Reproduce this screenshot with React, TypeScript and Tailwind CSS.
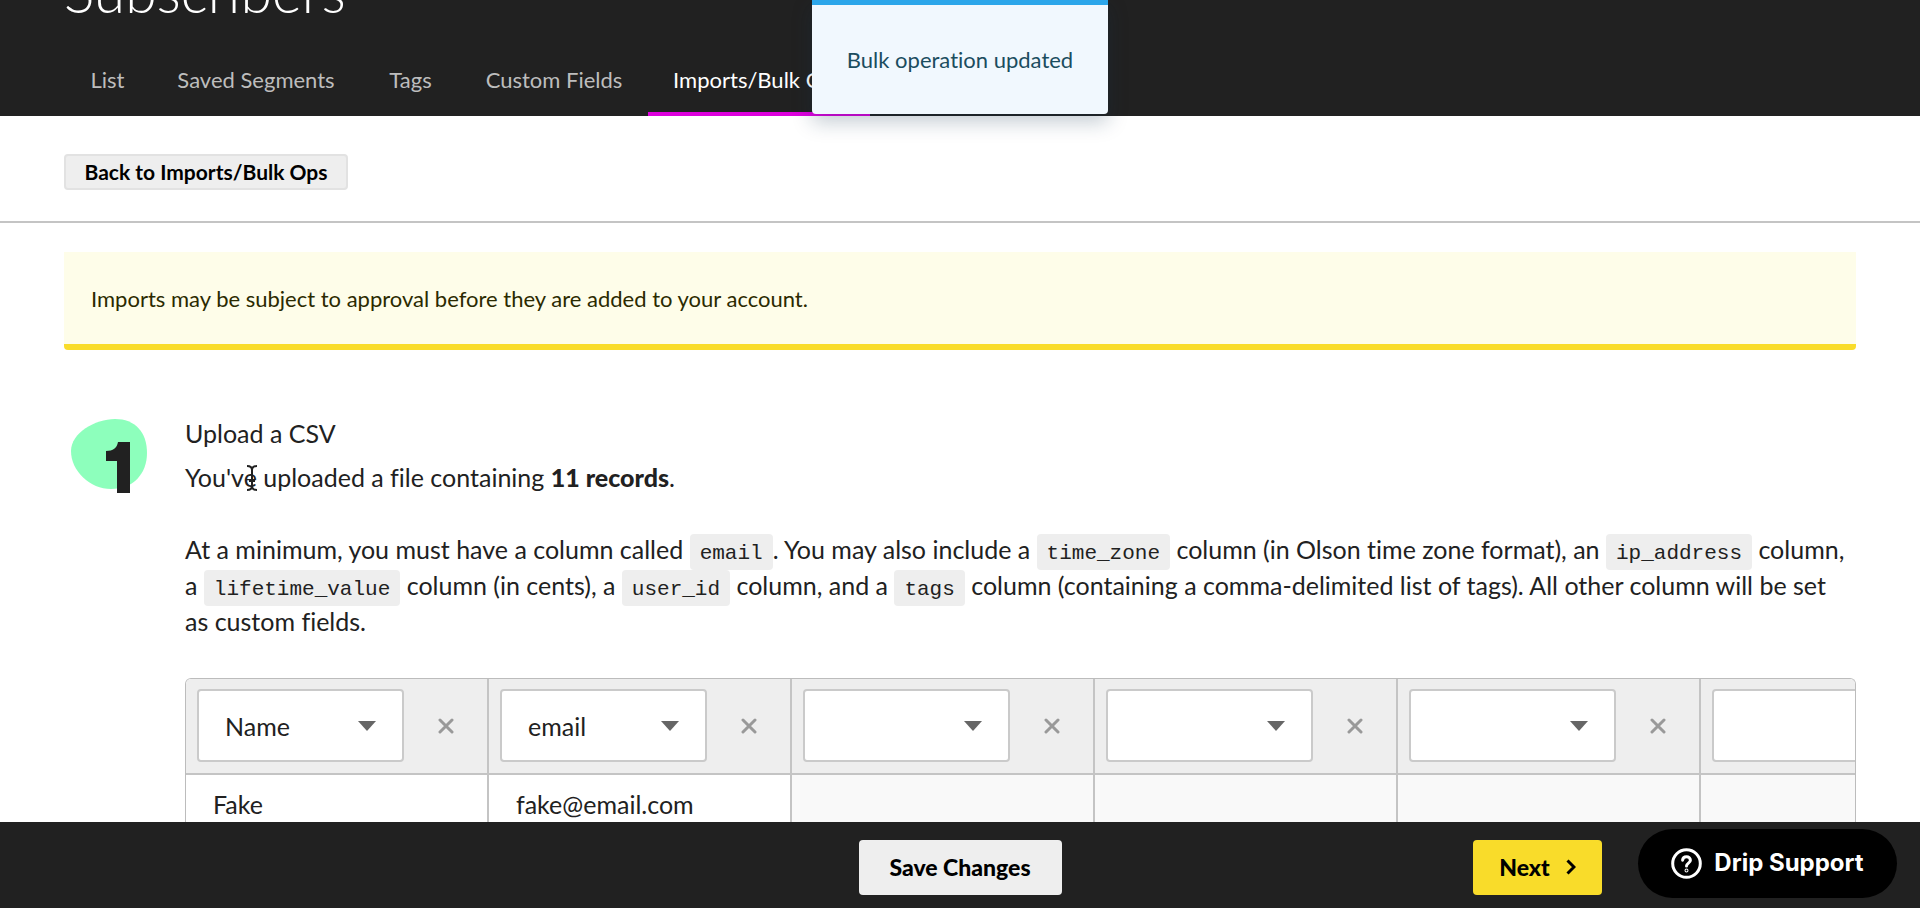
import type { ReactNode } from 'react'

const tabs = [
  { label: 'List', width: 'w-[87px]' },
  { label: 'Saved Segments', width: 'w-[210px]' },
  { label: 'Tags', width: 'w-[99px]' },
  { label: 'Custom Fields', width: 'w-[188px]' },
  { label: 'Imports/Bulk Ops', width: 'w-[222px]', active: true }
]

const columns = [
  { id: 'col-1', field: 'Name', value: 'Fake' },
  { id: 'col-2', field: 'email', value: 'fake@email.com' },
  { id: 'col-3', field: '', value: '' },
  { id: 'col-4', field: '', value: '' },
  { id: 'col-5', field: '', value: '' },
  { id: 'col-6', field: '', value: '' }
]

function Code({ children }: { children: ReactNode }) {
  return (
    <code className="rounded bg-[#eeeeee] px-[10px] pt-2 pb-[5px] font-['Liberation_Mono',monospace] text-[21px] leading-6">
      {children}
    </code>
  )
}

function Header() {
  return (
    <header className="flex h-[116px] shrink-0 flex-col overflow-hidden bg-[#212121] px-16">
      <div className="flex h-[19px] shrink-0 items-end">
        <h1 className="text-[57px] leading-[56px] font-light text-white">Subscribers</h1>
      </div>
      <nav className="flex flex-1">
        {tabs.map((tab) => (
          <a
            key={tab.label}
            href="#"
            className={`flex h-[97px] items-center justify-center border-b-4 pt-[27px] text-[22px] whitespace-nowrap ${tab.width} ${
              tab.active ? 'border-[#dd00dd] text-white' : 'border-transparent text-[#bdbdbd]'
            }`}
          >
            {tab.label}
          </a>
        ))}
      </nav>
    </header>
  )
}

function Toast() {
  return (
    <div
      role="status"
      className="absolute top-0 left-1/2 flex h-[114px] w-[296px] -translate-x-1/2 items-center justify-center rounded-b border-t-[5px] border-[#2ca6ea] bg-[#f1f8fe] text-[22px] whitespace-nowrap text-[#1b4d5f] shadow-[0_8px_20px_rgba(20,50,80,0.25)]"
    >
      Bulk operation updated
    </div>
  )
}

function StepBadge() {
  return (
    <svg className="ml-[7px] h-[78px] w-[78px] shrink-0" viewBox="0 0 78 78" aria-hidden="true">
      <path
        d="M44 0C64 0 76 13 76 34C76 55 62 70 40 70C19 70 0 52 0 32C0 14 24 0 44 0Z"
        fill="#8dffbc"
      />
      <path d="M47 23H59V74H46V42H35V32C42 32 46 29 47 23Z" fill="#212121" />
    </svg>
  )
}

function ColumnHeader({ id, field }: { id: string; field: string }) {
  return (
    <div className="flex items-center pt-[10px] pb-[11px] pl-[11px]">
      <div className="relative">
        <select
          id={id}
          aria-label="Column field"
          defaultValue={field}
          className="h-[73px] w-[207px] appearance-none rounded border-2 border-[#cacaca] bg-white pr-14 pl-[26px] text-[25px] font-normal text-[#212121]"
        >
          <option value={field}>{field}</option>
        </select>
        <svg className="pointer-events-none absolute top-8 right-7 h-[10px] w-[18px]" viewBox="0 0 18 10" aria-hidden="true">
          <path d="M0 0H18L9 10Z" fill="#666" />
        </svg>
      </div>
      <button type="button" aria-label="Remove column" className="flex flex-1 justify-center">
        <svg className="h-4 w-4" viewBox="0 0 16 16" fill="none" stroke="#999" strokeWidth="3" strokeLinecap="round" aria-hidden="true">
          <path d="M2 2L14 14M14 2L2 14" />
        </svg>
      </button>
    </div>
  )
}

function ImportTable() {
  return (
    <div className="mt-[39px] overflow-hidden rounded-t-md border border-b-0 border-[#bcbcbc]">
      <table className="w-[1818px] table-fixed border-separate border-spacing-0 text-left">
        <thead>
          <tr className="bg-[#eeeeee]">
            {columns.map((col) => (
              <th key={col.id} className="border-r-2 border-b-2 border-[#c4c4c4] p-0">
                <ColumnHeader id={col.id} field={col.field} />
              </th>
            ))}
          </tr>
        </thead>
        <tbody>
          <tr>
            {columns.map((col) => (
              <td key={col.id} className={`h-[58px] border-r-2 border-[#c4c4c4] px-[27px] ${col.value ? 'bg-white' : 'bg-[#f9f9f9]'}`}>
                {col.value}
              </td>
            ))}
          </tr>
        </tbody>
      </table>
    </div>
  )
}

function TextCursor() {
  return (
    <svg className="absolute top-0.5 -right-px h-7 w-3" viewBox="0 0 12 28" fill="none" stroke="#212121" strokeWidth="2" aria-hidden="true">
      <path d="M1 2Q6 2 6 6Q6 2 11 2M6 5V23M1 26Q6 26 6 22Q6 26 11 26M3 17H9" />
    </svg>
  )
}

function Footer() {
  return (
    <footer className="grid h-[86px] shrink-0 grid-cols-[1fr_auto_1fr] items-center bg-[#212121] pt-1">
      <div />
      <button type="button" className="h-[55px] w-[203px] rounded bg-[#eeeeee] text-[23px] font-black text-black">
        Save Changes
      </button>
      <div className="flex items-center justify-end gap-9 pr-[23px]">
        <button type="button" className="flex h-[55px] w-[129px] items-center justify-center gap-4 rounded bg-[#f9dc2a] text-[23px] font-black text-black">
          Next
          <svg className="h-4 w-[10px]" viewBox="0 0 10 16" fill="none" stroke="currentColor" strokeWidth="3" aria-hidden="true">
            <path d="M1.5 1.5L8 8L1.5 14.5" />
          </svg>
        </button>
        <button
          type="button"
          className="mb-2 flex h-[69px] w-[259px] items-center justify-center gap-3 rounded-full bg-black font-['Inter',sans-serif] text-2xl font-bold text-white"
        >
          <svg className="h-[31px] w-[31px]" viewBox="0 0 31 31" fill="none" stroke="white" strokeWidth="3" strokeLinecap="round" aria-hidden="true">
            <circle cx="15.5" cy="15.5" r="13.8" />
            <path d="M11.6 12.2C11.9 7.6 19.4 7.7 19.4 12.2C19.4 15.2 15.5 15 15.5 18" />
            <circle cx="15.5" cy="22.5" r="0.5" />
          </svg>
          Drip Support
        </button>
      </div>
    </footer>
  )
}

export default function App() {
  return (
    <div className="relative flex h-screen flex-col overflow-hidden bg-white font-['Lato',sans-serif] text-[#212121] [font-variant-ligatures:none]">
      <Header />
      <Toast />
      <div className="flex h-[107px] shrink-0 items-center border-b-2 border-[#c4c4c4] px-16 pt-1.5">
        <button type="button" className="h-9 w-[284px] rounded border-2 border-[#e2e2e2] bg-[#eeeeee] text-[21px] leading-8 font-bold text-black">
          Back to Imports/Bulk Ops
        </button>
      </div>
      <main className="min-h-0 flex-1 overflow-hidden px-16 pt-[29px]">
        <p className="flex h-[98px] items-center rounded-b border-b-[6px] border-[#f9dc2a] bg-[#fefde9] px-[27px] text-[22px] text-[#2b2a00]">
          Imports may be subject to approval before they are added to your account.
        </p>
        <section className="mt-[65px] flex">
          <div className="w-[121px] shrink-0 pt-1">
            <StepBadge />
          </div>
          <div className="min-w-0 flex-1 text-[25px] leading-9">
            <h2>Upload a CSV</h2>
            <p className="mt-2">
              <span className="relative">
                You've
                <TextCursor />
              </span>{' '}
              uploaded a file containing <strong className="font-black">11 records</strong>.
            </p>
            <p className="mt-9">
              At a minimum, you must have a column called <Code>email</Code>. You may also include a <Code>time_zone</Code> column (in
              Olson time zone format), an <Code>ip_address</Code> column, a <Code>lifetime_value</Code> column (in cents), a{' '}
              <Code>user_id</Code> column, and a <Code>tags</Code> column (containing a comma-delimited list of tags). All other column
              will be set as&nbsp;custom fields.
            </p>
            <ImportTable />
          </div>
        </section>
      </main>
      <Footer />
    </div>
  )
}
